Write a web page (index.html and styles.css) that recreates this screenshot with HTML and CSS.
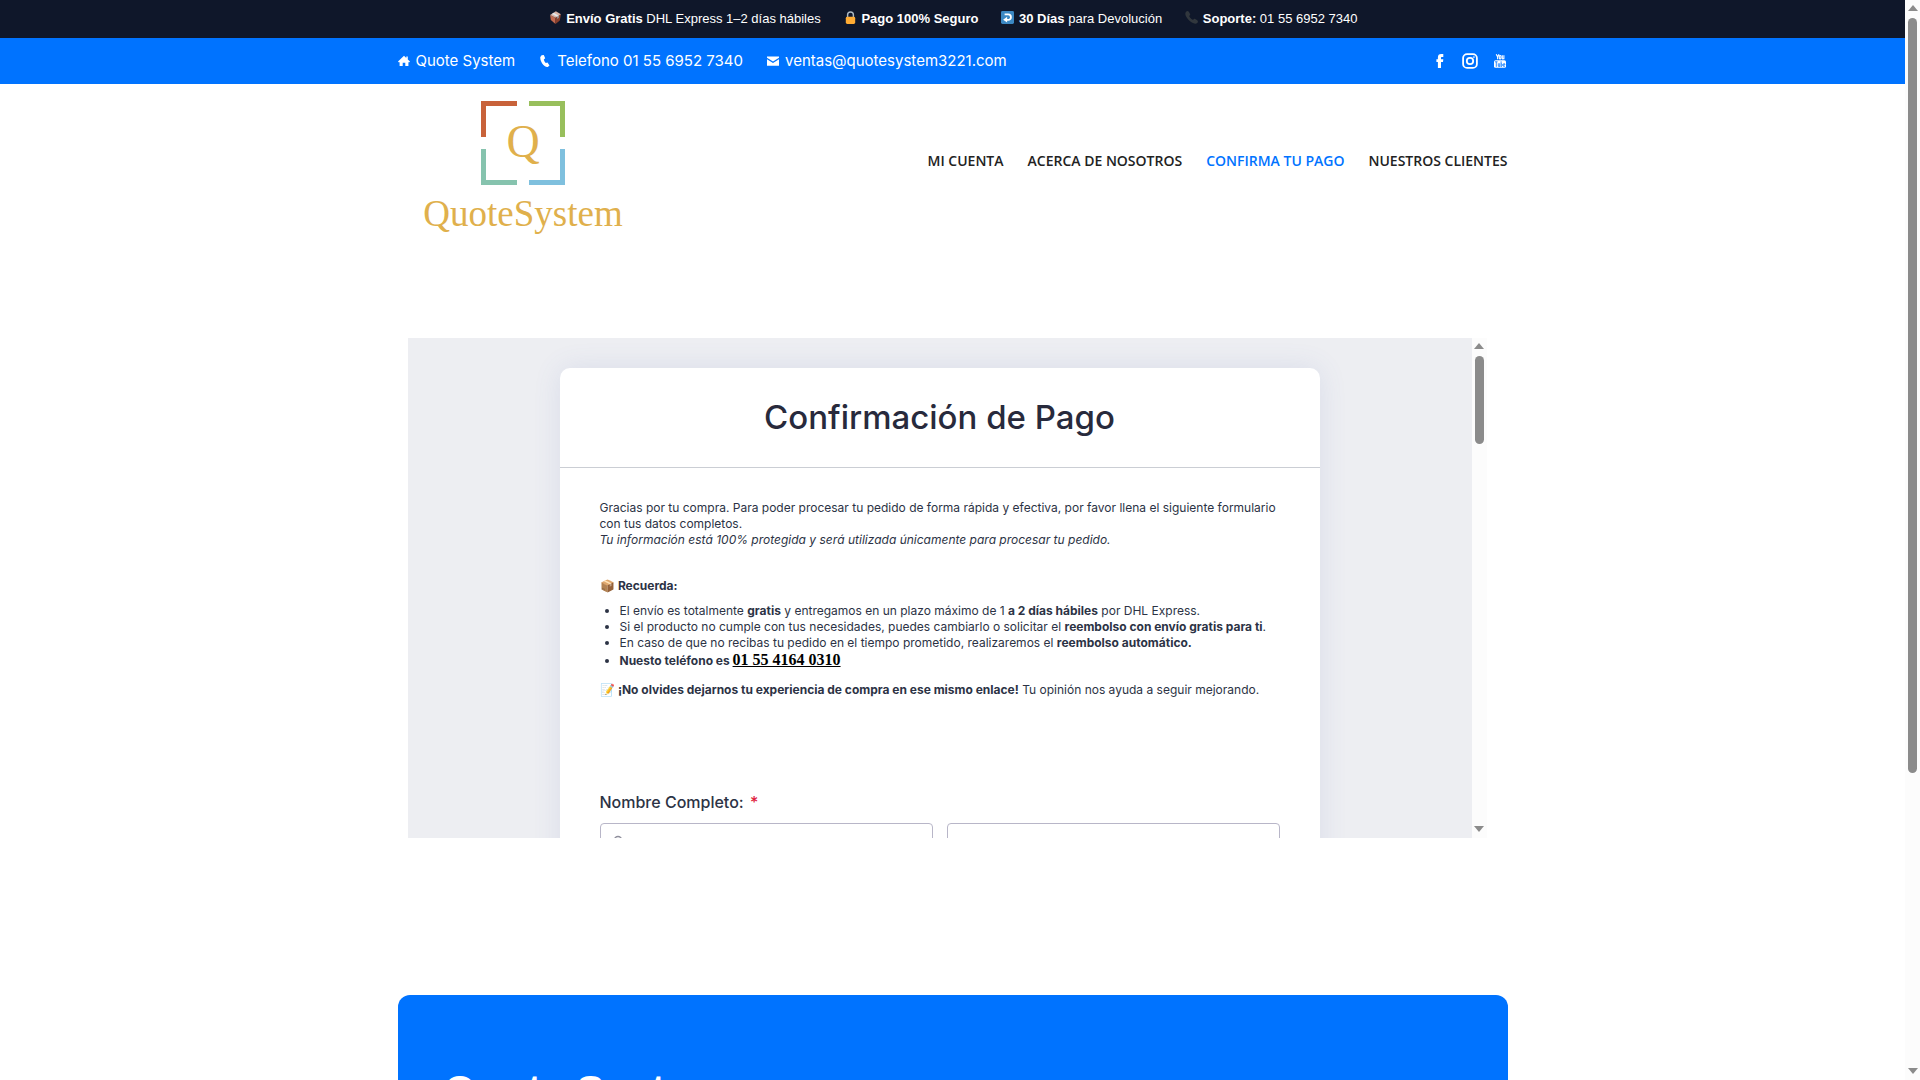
FILE: index.html
```html
<!DOCTYPE html>
<html lang="es">
<head>
<meta charset="utf-8">
<meta name="viewport" content="width=device-width, initial-scale=1">
<title>Confirma tu pago – Quote System</title>
<link rel="stylesheet" href="styles.css">
</head>
<body>
<div class="window">
  <div class="page">
    <div class="promo">
      <span><svg viewBox="0 0 36 36"><path d="M3 11 18 19v17L5 25z" fill="#c1694f"/><path d="M33 9 18 19v17l12-10z" fill="#8a3f2b"/><path d="M3 11 19 1l14 8-15 10z" fill="#d9b4a6"/><path d="M8 8l5-3 14 8-4 3z" fill="#e1e8ed"/><path d="M23 16l4-3v6l-4 3z" fill="#99aab5"/></svg> <strong>Envío Gratis</strong> DHL Express 1–2 días hábiles</span>
      <span><svg viewBox="0 0 36 36"><path d="M10 18V10.500a8 8 0 0 1 16 0V18" fill="none" stroke="#aab8c2" stroke-width="4"/><path d="M31 32a4 4 0 0 1-4 4H9a4 4 0 0 1-4-4V20a4 4 0 0 1 4-4h18a4 4 0 0 1 4 4z" fill="#ffac33"/></svg> <strong>Pago 100% Seguro</strong></span>
      <span><svg viewBox="0 0 36 36"><rect width="36" height="36" rx="4" fill="#3b88c3"/><path d="M10 9.500h10a7.500 7.500 0 0 1 0 15h-5" fill="none" stroke="#fff" stroke-width="5"/><path d="M17 16v16L6 24.500z" fill="#fff"/></svg> <strong>30 Días</strong> para Devolución</span>
      <span><svg viewBox="0 0 36 36"><path d="M3 2c3-3 6-2 8 1l3 5c1 2 0 4-2 5-2 2 9 13 11 11 1-2 3-3 5-2l5 3c3 2 4 5 1 8-3 3-9 3-15-1C12 27 6 21 3 15 0 9 0 5 3 2z" fill="#31373d"/></svg> <strong>Soporte:</strong> 01 55 6952 7340</span>
    </div>

    <div class="contact-bar">
      <div class="container contact-row">
        <ul class="contacts">
          <li><svg viewBox="0 0 12 12" fill="currentColor"><path d="M6 .8 8.300 3V1.500h1.500v3L12 6.600l-.6.600h-1V11H7.300V7.700H4.700V11H1.600V7.200h-1L0 6.600z"/></svg><a href="#">Quote System</a></li>
          <li><svg viewBox="0 0 12 12" fill="currentColor"><path d="M2.600.300 4.800 0l1.400 3.300-1.400 1.100c.4 1.500 1 2.600 2 3.600l1.700-.5 2 2.900-1.700 1.500C4.800 12.500.8 6 1.300 2z"/></svg><a href="#">Telefono 01 55 6952 7340</a></li>
          <li><svg viewBox="0 0 12 12" fill="currentColor"><path d="M0 1.500h12v1.200L6 6.600 0 2.700z"/><path d="M0 4.200l6 3.900 6-3.900v6.600H0z"/></svg><a href="#">ventas@quotesystem3221.com</a></li>
        </ul>
        <div class="social">
          <a href="#" aria-label="Facebook"><svg viewBox="0 0 16 16" fill="currentColor"><path d="M5.900 15V9H4.400V6.200h1.500V4.500C5.900 2 7 1 9.200 1h2.100v2.900H9.900c-.7 0-.9.300-.9.900v1.400h2.300L11 9H9v6z"/></svg></a>
          <a href="#" aria-label="Instagram"><svg viewBox="0 0 16 16" fill="none" stroke="currentColor" stroke-width="1.800"><rect x="1.100" y="1.100" width="13.800" height="13.800" rx="4"/><circle cx="8" cy="8" r="3.200"/><circle cx="11.900" cy="4.100" r=".3" stroke-width="1.200"/></svg></a>
          <a href="#" aria-label="YouTube"><svg viewBox="0 0 16 16" fill="none" stroke="currentColor" stroke-width="1.100"><path d="M4.200 1.200 5.600 3.800 7 1.200M5.600 3.600V6.200M7.300 3.200v2.100c0 1 1.600 1 1.600 0V3.200c0-1-1.600-1-1.600 0M10.300 2.200v3.100c0 .9.900.8 1.600.1M11.900 2.200v4"/><rect x="2" y="7.200" width="12" height="7.600" rx="1.600" fill="currentColor" stroke="none"/><path stroke="#0073ff" stroke-width=".8" d="M3 8.800h2.600M4.300 8.800v5M6.300 10.300v2.900c.5.600 1.100.3 1.400-.1M7.700 10.300v3.500M9.100 8.300v5.500M9.100 11c1.500-1 1.500 2.800 0 2.300M12.900 13c-1.200 1.200-1.700.3-1.700-1.100 0-2 1.900-2 1.700 0h-1.700"/></svg></a>
        </div>
      </div>
    </div>

    <header class="container site-header">
      <a class="logo" href="#" aria-label="QuoteSystem">
        <svg viewBox="0 0 250 154">
          <g fill="none" stroke-width="5">
            <path stroke="#c8623a" d="M119 19.500H85.500V53"/>
            <path stroke="#98bf5c" d="M131 19.500h33.500V53"/>
            <path stroke="#86c3ae" d="M85.500 65v33.500H119"/>
            <path stroke="#7fc0de" d="M164.500 65v33.500H131"/>
          </g>
          <text x="125" y="73" font-size="46" text-anchor="middle">Q</text>
          <text x="125" y="142" font-size="37" text-anchor="middle">QuoteSystem</text>
        </svg>
      </a>
      <nav class="menu">
        <a href="#">MI CUENTA</a>
        <a href="#">ACERCA DE NOSOTROS</a>
        <a href="#" class="current">CONFIRMA TU PAGO</a>
        <a href="#">NUESTROS CLIENTES</a>
      </nav>
    </header>

    <main class="container">
      <div class="embed">
        <div class="embed-view">
          <form class="card">
            <h1>Confirmación de Pago</h1>
            <div class="card-body">
              <p>Gracias por tu compra. Para poder procesar tu pedido de forma rápida y efectiva, por favor llena el siguiente formulario con tus datos completos.<br><em>Tu información está 100% protegida y será utilizada únicamente para procesar tu pedido.</em></p>
              <p class="remember">📦 <strong>Recuerda:</strong></p>
              <ul>
                <li>El envío es totalmente <strong>gratis</strong> y entregamos en un plazo máximo de 1 <strong>a 2 días hábiles</strong> por DHL Express.</li>
                <li>Si el producto no cumple con tus necesidades, puedes cambiarlo o solicitar el <strong>reembolso con envío gratis para ti</strong>.</li>
                <li>En caso de que no recibas tu pedido en el tiempo prometido, realizaremos el <strong>reembolso automático.</strong></li>
                <li class="phone"><strong>Nuesto teléfono es <a href="#">01 55 4164 0310</a></strong></li>
              </ul>
              <p>📝 <strong>¡No olvides dejarnos tu experiencia de compra en ese mismo enlace!</strong> Tu opinión nos ayuda a seguir mejorando.</p>
              <label class="field-label" for="nombre">Nombre Completo: <span class="required">*</span></label>
              <div class="fields">
                <div class="field">
                  <svg viewBox="0 0 16 16" fill="none" stroke="#8f8f9c" stroke-width="1.500"><circle cx="8" cy="5" r="3.500"/><path d="M1.500 15c0-6 13-6 13 0"/></svg>
                  <input id="nombre" type="text">
                </div>
                <div class="field"><input type="text" aria-label="Apellidos"></div>
              </div>
            </div>
          </form>
        </div>
        <div class="scrollbar" aria-hidden="true"><i class="up"></i><div class="track"><i class="thumb thumb-embed"></i></div><i class="down"></i></div>
      </div>
    </main>

    <footer class="container">
      <section class="about"><h2>Quote System</h2></section>
    </footer>
  </div>
  <div class="scrollbar" aria-hidden="true"><i class="up"></i><div class="track"><i class="thumb thumb-page"></i></div><i class="down"></i></div>
</div>
</body>
</html>
```
FILE: styles.css
```css
* { box-sizing: border-box; }

body {
  margin: 0;
  background: #fff;
  color: #222;
  font-family: Inter, "Open Sans", sans-serif;
}

a { color: inherit; text-decoration: none; }

.window { display: flex; height: 100vh; overflow: hidden; }
.page { flex: 1; min-width: 0; overflow: hidden; }

.container { width: 100%; max-width: 1110px; margin: 0 auto; }

/* Promo strip */
.promo {
  display: flex;
  flex-wrap: wrap;
  justify-content: center;
  gap: 0 22px;
  padding: 8px 16px;
  background: #0f172a;
  color: #fff;
  font: 13px/22px "Liberation Sans", Arial, sans-serif;
}
.promo svg { width: 13px; height: 13px; margin: 0 1px; vertical-align: -1px; }

/* Contact bar */
.contact-bar { background: #0073ff; color: #fff; font-size: 15px; line-height: 24px; padding: 11px 0; }
.contact-row { display: flex; justify-content: space-between; align-items: center; }
.contacts { display: flex; flex-wrap: wrap; gap: 24px; margin: 0; padding: 0; list-style: none; }
.contacts li { display: flex; align-items: center; gap: 6px; }
.contacts svg { width: 12px; height: 12px; }
.social { display: flex; gap: 14px; }
.social svg { display: block; width: 16px; height: 16px; }

/* Header */
.site-header { display: flex; justify-content: space-between; align-items: center; }
.logo svg { display: block; width: 250px; height: 154px; }
.logo text { font-family: "Liberation Serif", serif; fill: #e0b04c; }
.menu { display: flex; flex-wrap: wrap; gap: 24px; font: 600 14px/24px "Open Sans", sans-serif; }
.menu .current { color: #0073ff; }

/* Embedded form */
main { padding: 100px 21px 157px 10px; }
.embed { display: flex; height: 500px; overflow: hidden; }
.embed-view { flex: 1; min-width: 0; padding: 30px; overflow: hidden; background: #edeef2; }
.card {
  max-width: 760px;
  margin: 0 auto;
  border-radius: 10px;
  background: #fff;
  color: #2c3345;
  box-shadow: 0 0 28px rgba(84, 105, 182, .12);
}
.card h1 {
  margin: 0;
  padding: 24px 40px 25px;
  border-bottom: 1px solid #cbced4;
  color: #282a3c;
  font-size: 33px;
  font-weight: 500;
  line-height: 50px;
  text-align: center;
}
.card-body { padding: 32px 40px; font-size: 12px; line-height: 16px; }
.card-body p { margin: 0; }
.card-body .remember { margin-top: 30px; }
.card-body ul { margin: 9px 0 13px; padding-left: 20px; }
.phone a { font: bold 16px/17px "Liberation Serif", serif; color: #000; text-decoration: underline; }
.field-label { display: block; margin: 92px 0 9px; font-size: 16px; font-weight: 500; line-height: 24px; }
.required { margin-left: 2px; color: #e0203c; }
.fields { display: grid; grid-template-columns: 1fr 1fr; gap: 14px; }
.field { position: relative; }
.field svg { position: absolute; left: 10px; top: 12px; width: 16px; height: 16px; }
.field input { display: block; width: 100%; height: 40px; padding: 0 12px 0 36px; border: 1px solid #b8b6c8; border-radius: 4px; background: transparent; font: inherit; }

/* Footer panel */
.about { padding: 72px 46px; border-radius: 12px; background: #0073ff; color: #fff; }
.about h2 { margin: 0; font: bold 42px/48px "Liberation Sans", Arial, sans-serif; }

/* Scrollbars */
.scrollbar { display: flex; flex-direction: column; align-items: center; flex: none; width: 15px; padding: 5px 0 6px; background: #fcfcfc; }
.scrollbar .up, .scrollbar .down { border: 5px solid transparent; }
.scrollbar .up { border-top: 0; border-bottom: 6px solid #8b8b8b; }
.scrollbar .down { border-bottom: 0; border-top: 6px solid #8b8b8b; }
.track { flex: 1; width: 9px; padding: 7px 0; }
.thumb { display: block; border-radius: 5px; background: #8b8b8b; }
.thumb-page { height: 72.4%; }
.thumb-embed { height: 19%; }
```
